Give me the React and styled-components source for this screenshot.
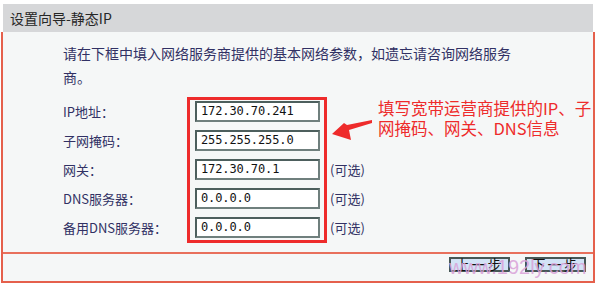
import React from 'react';
import styled, { createGlobalStyle } from 'styled-components';

const GlobalStyle = createGlobalStyle`
  body {
    margin: 0;
    background: #ffffff;
    font-family: "Noto Sans CJK SC", "Liberation Sans", sans-serif;
  }
`

const Frame = styled.div`
  width: 594px;
  margin: 4px 0 0 1px;
`
const Header = styled.div`
  height: 28px;
  margin: 0 2px;
  padding-left: 7px;
  background: #d6d7d9;
  color: #262626;
  font-size: 14px;
  line-height: 28px;
`
const Box = styled.div`
  border: 2px solid #e5604c;
  border-top: none;
  background: #f5f7f7;
`
const Main = styled.div`
  height: 222px;
  padding: 9px 0 0 60px;
  box-sizing: border-box;
  border-bottom: 2px solid #e8705c;
`
const Intro = styled.p`
  width: 455px;
  margin: 0;
  font-size: 14px;
  line-height: 24px;
  color: #313164;
`
const Form = styled.div`
  display: flex;
  margin-top: 8px;
`
const Column = styled.div`
  display: flex;
  flex-direction: column;
  flex-shrink: 0;
  gap: 8px;
  padding-top: 4px;
  width: ${p => p.$width ? p.$width + 'px' : 'auto'};
`
const Label = styled.div`
  height: 21px;
  line-height: 21px;
  font-size: 13px;
  color: #313164;
  white-space: nowrap;
`
const RedBox = styled.div`
  display: flex;
  flex-direction: column;
  flex-shrink: 0;
  gap: 8px;
  padding: 1px 4px 2px 5px;
  border: 3px solid #ee2b2b;
`
const Input = styled.div`
  width: 125px;
  height: 21px;
  box-sizing: border-box;
  border: 2px solid #4d5f5d;
  border-right-color: #6f7f7d;
  border-bottom-color: #6f7f7d;
  background: #ffffff;
  padding-left: 4px;
  font-family: "DejaVu Sans Mono", monospace;
  font-size: 12px;
  line-height: 17px;
  color: #111;
  letter-spacing: -0.1px;
`
const Optional = styled(Label)`
  padding-left: 3px;
`
const Note = styled.div`
  display: flex;
  height: 50px;
`
const NoteText = styled.div`
  flex-shrink: 0;
  margin-top: -3px;
  color: #ee2b2b;
  font-size: 16.5px;
  line-height: 20px;
  white-space: nowrap;
`
const Footer = styled.div`
  position: relative;
  height: 27px;
  display: flex;
  justify-content: flex-end;
  align-items: flex-start;
  gap: 15px;
  padding: 3px 7px 0 0;
  box-sizing: border-box;
`
const Button = styled.div`
  width: 61px;
  height: 15px;
  box-sizing: border-box;
  border: 2px solid #465756;
  background: #d2e3f6;
  color: #111;
  font-size: 14px;
  line-height: 11px;
  text-align: center;
  letter-spacing: 2px;
`
const Watermark = styled.div`
  position: absolute;
  left: 446px;
  top: 1px;
  font-family: "Liberation Sans", Arial, sans-serif;
  font-size: 20px;
  line-height: 24px;
  color: #d9a2d9;
  opacity: 0.85;
  pointer-events: none;
`

const fields = [
  { label: 'IP地址：', value: '172.30.70.241' },
  { label: '子网掩码：', value: '255.255.255.0' },
  { label: '网关：', value: '172.30.70.1', optional: true },
  { label: 'DNS服务器：', value: '0.0.0.0', optional: true },
  { label: '备用DNS服务器：', value: '0.0.0.0', optional: true },
];

function Arrow() {
  return (
    <svg width="51" height="50" viewBox="0 0 51 50">
      <polygon
        fill="#ee2b2b"
        points="5,33 17,22 20,24 45,19 45,22 22,29 24,39"
      />
    </svg>
  )
}

export default function App() {
  return (
    <>
      <GlobalStyle />
      <Frame>
        <Header>设置向导-静态IP</Header>
        <Box>
          <Main>
            <Intro>请在下框中填入网络服务商提供的基本网络参数，如遗忘请咨询网络服务商。</Intro>
            <Form>
              <Column $width={124}>
                {fields.map(f => <Label key={f.label}>{f.label}</Label>)}
              </Column>
              <RedBox>
                {fields.map(f => <Input key={f.label}>{f.value}</Input>)}
              </RedBox>
              <Column>
                <Note>
                  <Arrow />
                  <NoteText>
                    填写宽带运营商提供的IP、子<br />网掩码、网关、DNS信息
                  </NoteText>
                </Note>
                {fields.filter(f => f.optional).map(f => <Optional key={f.label}>(可选)</Optional>)}
              </Column>
            </Form>
          </Main>
          <Footer>
            <Button>上一步</Button>
            <Button>下一步</Button>
            <Watermark>www.192ly.com</Watermark>
          </Footer>
        </Box>
      </Frame>
    </>
  )
}
